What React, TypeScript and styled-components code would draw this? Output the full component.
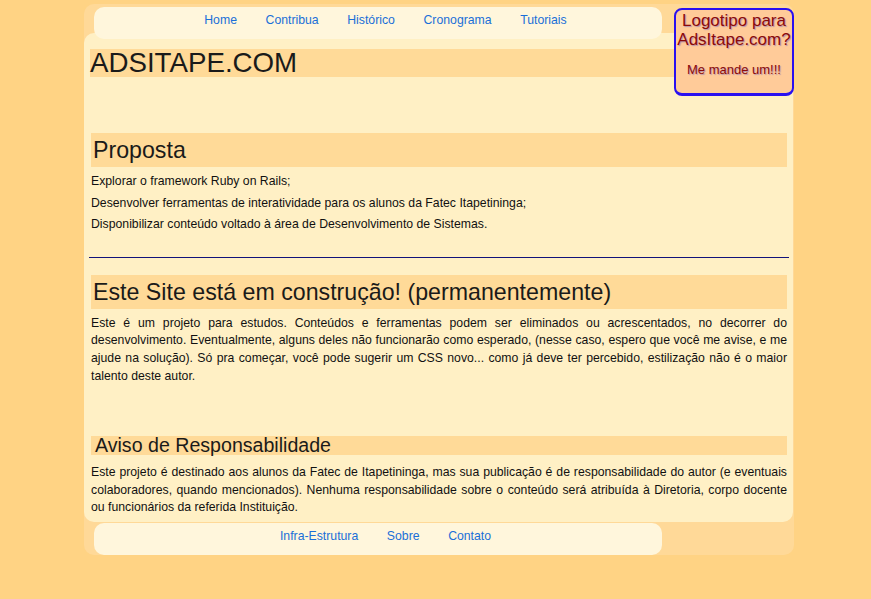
import React from "react";
import styled, { createGlobalStyle } from "styled-components";

const GlobalStyle = createGlobalStyle`
  html, body {
    margin: 0;
    padding: 0;
    background: #ffd384;
    font-family: "Liberation Sans", Arial, sans-serif;
    color: #111;
  }
`;

const Wrapper = styled.div`
  position: relative;
  width: 710px;
  margin: 4px 0 0 84px;
  padding: 3px 0 0 0;
  background: #ffd998;
  border-radius: 10px;
`;

const NavBar = styled.nav<{ $top?: boolean }>`
  position: relative;
  z-index: 1;
  box-sizing: border-box;
  width: 568px;
  height: 32px;
  margin: ${(p) => (p.$top ? "0 0 0 10px" : "1px 0 0 10px")};
  padding: 6px 0 0 15px;
  display: flex;
  justify-content: center;
  gap: 28.6px;
  background: #fff6dc;
  border-radius: 10px;
`;

const NavLink = styled.a`
  font-size: 12.25px;
  line-height: 15px;
  color: #1a6fd8;
  text-decoration: none;
  cursor: pointer;
`;

const Content = styled.main`
  position: relative;
  margin: -6px 1px 0 0;
  padding: 16px 6px 1.5px 7px;
  background: #fff0c5;
  border-radius: 10px;
  display: flow-root;
`;

const Band = `
  background: #ffda98;
  color: #1a1a1a;
  font-weight: normal;
`;

const Title = styled.h1`
  ${Band}
  margin: 0 0 0 -1px;
  font-size: 27.7px;
  line-height: 28px;
  padding: 0;
`;

const SectionTitle = styled.h2<{ $gap: number }>`
  ${Band}
  margin: ${(p) => p.$gap}px 0 0 0;
  font-size: 23.2px;
  line-height: 28px;
  padding: 3px 2px;
`;

const SubTitle = styled.h3<{ $gap: number }>`
  ${Band}
  margin: ${(p) => p.$gap}px 0 0 0;
  font-size: 19.6px;
  line-height: 19px;
  padding: 0 4px;
`;

const Para = styled.p<{ $justify?: boolean; $top?: number }>`
  margin: ${(p) => p.$top ?? 4}px 0 4px 0;
  font-size: 12.25px;
  line-height: 17.6px;
  text-align: ${(p) => (p.$justify ? "justify" : "left")};
`;

const Divider = styled.hr`
  height: 0;
  border: none;
  border-top: 1px solid #12127a;
  margin: 23px -2px 17px -2px;
`;

const LogoBox = styled.aside`
  position: absolute;
  z-index: 2;
  top: 4px;
  right: 0;
  box-sizing: border-box;
  width: 120px;
  height: 88px;
  padding-top: 2px;
  background: #ffcb99;
  border: 2px solid #2a10f0;
  border-bottom-width: 3px;
  border-radius: 8px;
  text-align: center;
  color: #8b0a0a;
  text-shadow: 1px 1px 1px rgba(60, 60, 200, 0.4);
`;

const LogoTitle = styled.div`
  font-size: 17px;
  line-height: 18.5px;
`;

const LogoNote = styled.div`
  margin-top: 13px;
  font-size: 13px;
  line-height: 15px;
`;

const topLinks = ["Home", "Contribua", "Histórico", "Cronograma", "Tutoriais"];
const bottomLinks = ["Infra-Estrutura", "Sobre", "Contato"];

export default function App() {
  return (
    <>
      <GlobalStyle />
      <Wrapper>
        <NavBar $top>
          {topLinks.map((l) => (
            <NavLink key={l}>{l}</NavLink>
          ))}
        </NavBar>
        <LogoBox>
          <LogoTitle>
            Logotipo para
            <br />
            AdsItape.com?
          </LogoTitle>
          <LogoNote>Me mande um!!!</LogoNote>
        </LogoBox>
        <Content>
          <Title>ADSITAPE.COM</Title>
          <SectionTitle $gap={56}>Proposta</SectionTitle>
          <Para $top={6}>Explorar o framework Ruby on Rails;</Para>
          <Para>Desenvolver ferramentas de interatividade para os alunos da Fatec Itapetininga;</Para>
          <Para>Disponibilizar conteúdo voltado à área de Desenvolvimento de Sistemas.</Para>
          <Divider />
          <SectionTitle $gap={17}>Este Site está em construção! (permanentemente)</SectionTitle>
          <Para $justify $top={6}>
            Este é um projeto para estudos. Conteúdos e ferramentas podem ser eliminados ou acrescentados, no
            decorrer do desenvolvimento. Eventualmente, alguns deles não funcionarão como esperado, (nesse caso,
            espero que você me avise, e me ajude na solução). Só pra começar, você pode sugerir um CSS novo... como
            já deve ter percebido, estilização não é o maior talento deste autor.
          </Para>
          <SubTitle $gap={51}>Aviso de Responsabilidade</SubTitle>
          <Para $justify $top={9}>
            Este projeto é destinado aos alunos da Fatec de Itapetininga, mas sua publicação é de responsabilidade do
            autor (e eventuais colaboradores, quando mencionados). Nenhuma responsabilidade sobre o conteúdo será
            atribuída à Diretoria, corpo docente ou funcionários da referida Instituição.
          </Para>
        </Content>
        <NavBar>
          {bottomLinks.map((l) => (
            <NavLink key={l}>{l}</NavLink>
          ))}
        </NavBar>
      </Wrapper>
    </>
  );
}
